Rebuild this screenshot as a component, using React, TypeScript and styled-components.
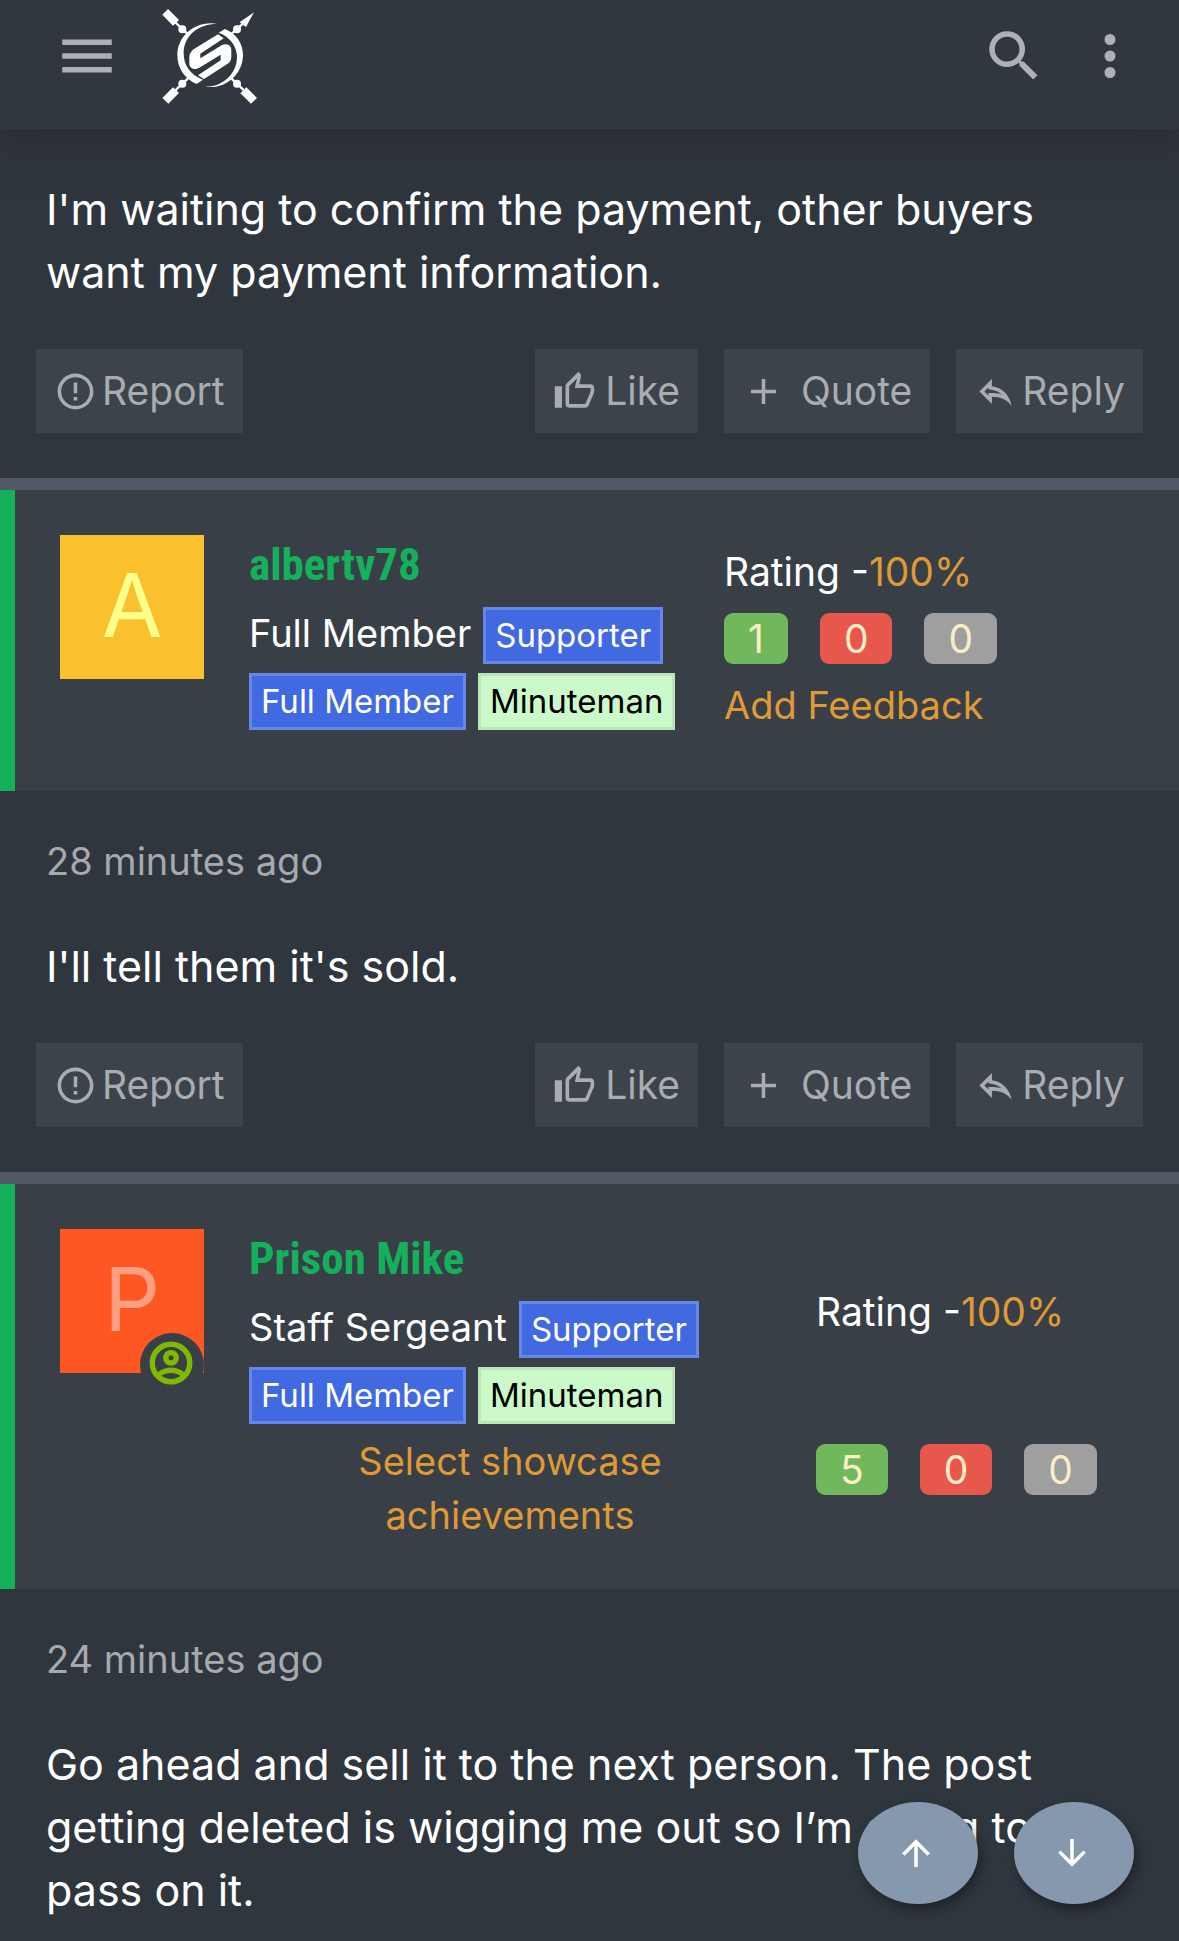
import React from "react";
import styled, { createGlobalStyle } from "styled-components";

const GlobalStyle = createGlobalStyle`
  *, *::before, *::after { box-sizing: border-box; }
  body {
    margin: 0;
    background: #30363e;
    color: #ffffff;
    font-family: Inter, Roboto, "Liberation Sans", sans-serif;
    font-size: 38px;
    line-height: 54px;
  }
  button {
    margin: 0;
    border: 0;
    font: inherit;
    color: inherit;
    cursor: pointer;
  }
  a { color: inherit; text-decoration: none; }
`;

const ICONS = {
  menu: "M3,6H21V8H3V6M3,11H21V13H3V11M3,16H21V18H3V16Z",
  search:
    "M9.5,3A6.5,6.5 0 0,1 16,9.5C16,11.11 15.41,12.59 14.44,13.73L14.71,14H15.5L20.5,19L19,20.5L14,15.5V14.71L13.73,14.44C12.59,15.41 11.11,16 9.5,16A6.5,6.5 0 0,1 3,9.5A6.5,6.5 0 0,1 9.5,3M9.5,5C7,5 5,7 5,9.5C5,12 7,14 9.5,14C12,14 14,12 14,9.5C14,7 12,5 9.5,5Z",
  more: "M12,16A2,2 0 0,1 14,18A2,2 0 0,1 12,20A2,2 0 0,1 10,18A2,2 0 0,1 12,16M12,10A2,2 0 0,1 14,12A2,2 0 0,1 12,14A2,2 0 0,1 10,12A2,2 0 0,1 12,10M12,4A2,2 0 0,1 14,6A2,2 0 0,1 12,8A2,2 0 0,1 10,6A2,2 0 0,1 12,4Z",
  report:
    "M11,15H13V17H11V15M11,7H13V13H11V7M12,2C6.47,2 2,6.5 2,12A10,10 0 0,0 12,22A10,10 0 0,0 22,12A10,10 0 0,0 12,2M12,20A8,8 0 0,1 4,12A8,8 0 0,1 12,4A8,8 0 0,1 20,12A8,8 0 0,1 12,20Z",
  like: "M5,9V21H1V9H5M9,21A2,2 0 0,1 7,19V9C7,8.45 7.22,7.95 7.59,7.59L14.17,1L15.23,2.06C15.5,2.33 15.67,2.7 15.67,3.11L15.64,3.43L14.69,8H21C22.11,8 23,8.9 23,10V12C23,12.26 22.95,12.5 22.86,12.73L19.84,19.78C19.54,20.5 18.83,21 18,21H9M9,19H18.03L21,12V10H12.21L13.34,4.68L9,9.03V19Z",
  plus: "M19,13H13V19H11V13H5V11H11V5H13V11H19V13Z",
  reply:
    "M8,9.8V10.7L9.7,11C12.3,11.4 14.2,12.4 15.6,13.7C13.9,13.2 12.1,12.9 10,12.9H8V14.2L5.8,12L8,9.8M10,5L3,12L10,19V14.9C15,14.9 18.5,16.5 21,20C20,15 17,10 10,9V5Z",
  up: "M13,20H11V8L5.5,13.5L4.08,12.08L12,4.16L19.92,12.08L18.5,13.5L13,8V20Z",
  down: "M11,4H13V16L18.5,10.5L19.92,11.92L12,19.84L4.08,11.92L5.5,10.5L11,16V4Z",
  account:
    "M12,2A10,10 0 0,0 2,12A10,10 0 0,0 12,22A10,10 0 0,0 22,12A10,10 0 0,0 12,2M7.07,18.28C7.5,17.38 10.12,16.5 12,16.5C13.88,16.5 16.5,17.38 16.93,18.28C15.57,19.36 13.86,20 12,20C10.14,20 8.43,19.36 7.07,18.28M18.36,16.83C16.93,15.09 13.46,14.5 12,14.5C10.54,14.5 7.07,15.09 5.64,16.83C4.62,15.5 4,13.82 4,12C4,7.59 7.59,4 12,4C16.41,4 20,7.59 20,12C20,13.82 19.38,15.5 18.36,16.83M12,6C10.06,6 8.5,7.56 8.5,9.5C8.5,11.44 10.06,13 12,13C13.94,13 15.5,11.44 15.5,9.5C15.5,7.56 13.94,6 12,6M12,11A1.5,1.5 0 0,1 10.5,9.5A1.5,1.5 0 0,1 12,8A1.5,1.5 0 0,1 13.5,9.5A1.5,1.5 0 0,1 12,11Z",
};

type IconName = keyof typeof ICONS;

const Svg = styled.svg<{ $size: number }>`
  display: block;
  flex: none;
  width: ${(p) => p.$size}px;
  height: ${(p) => p.$size}px;
  fill: currentColor;
`;

const Icon = ({ name, size }: { name: IconName; size: number }) => (
  <Svg $size={size} viewBox="0 0 24 24" aria-hidden="true">
    <path
      d={ICONS[name]}
      stroke={name === "account" ? "currentColor" : "none"}
      strokeWidth="0.6"
    />
  </Svg>
);

const TopBar = styled.header`
  position: relative;
  z-index: 2;
  display: flex;
  align-items: center;
  height: 129px;
  padding: 0 36px 17px 54px;
  background: #31373f;
  color: #adb1b5;
  box-shadow: 0 9px 42px rgba(36, 34, 44, 0.65);
`;

const BarButton = styled.button`
  display: flex;
  padding: 0;
  background: none;
`;

const LogoLink = styled.a`
  display: block;
  margin: 0 auto 0 42px;
  color: #ffffff;
`;

const Tools = styled.div`
  display: flex;
  gap: 30px;
`;

const Logo = () => (
  <Svg $size={95} viewBox="486 27 285 285" aria-hidden="true">
    <polygon points="504,27 487,44 519,77 537,60" />
    <polygon points="762,37 719,67 738,81" />
    <polygon points="519,262 487,294 505,311 537,279" />
    <polygon points="739,262 721,280 753,311 771,294" />
    <path
      d="M526 67L562 101M732 68L695 101M526 271L564 235M732 271L694 235"
      stroke="currentColor"
      strokeWidth="7"
    />
    <circle cx="547" cy="88" r="12" />
    <circle cx="711" cy="88" r="12" />
    <circle cx="547" cy="251" r="12" />
    <circle cx="711" cy="251" r="12" />
    <path d="M652 71C585 60 532 108 532 165C532 205 555 238 590 252L609 239C570 225 551 195 551 160C551 110 590 72 652 71Z" />
    <path d="M614 260C680 270 729 220 729 165C729 130 708 100 675 87L656 98C690 110 711 140 711 170C711 220 670 261 614 260Z" />
    <path d="M654 103L671 115L601 161L601 175L665 136C684 127 694 139 694 150V170C694 180 690 186 683 191L612 237L594 226L662 181V164L598 203C580 212 568 204 568 190V172C568 160 574 153 582 147Z" />
  </Svg>
);

const Article = styled.article`
  & + & {
    border-top: 12px solid #525866;
  }
`;

const UserPanel = styled.div<{ $ratingWidth: number }>`
  display: grid;
  grid-template-columns: 144px minmax(0, 1fr) ${(p) => p.$ratingWidth}px;
  column-gap: 45px;
  padding: 45px 45px 47px;
  border-left: 15px solid #14b05c;
  background: #393f47;
`;

const Avatar = styled.a<{ $bg: string; $fg: string }>`
  position: relative;
  display: flex;
  justify-content: center;
  width: 144px;
  height: 144px;
  background: ${(p) => p.$bg};
  color: ${(p) => p.$fg};
  font-size: 88px;
  line-height: 140px;
`;

const Online = styled.span`
  position: absolute;
  right: 0;
  bottom: -24px;
  display: flex;
  align-items: center;
  justify-content: center;
  width: 64px;
  height: 64px;
  padding: 0 2px 5px 0;
  border-radius: 50%;
  background: #393f47;
  color: #7fb900;
`;

const Details = styled.div`
  min-width: 0;
`;

const UserName = styled.h4`
  margin: 0 0 12px;
  color: #14b05c;
  font-family: "Roboto Condensed", "Liberation Sans Narrow", Roboto, sans-serif;
  font-size: 45px;
  font-weight: 700;
  line-height: 60px;
`;

const Titles = styled.div`
  display: flex;
  flex-wrap: wrap;
  align-items: baseline;
  gap: 9px 12px;
`;

const Title = styled.span`
  line-height: 48px;
`;

const Banner = styled.span<{ $light?: boolean }>`
  padding: 0 9px;
  border: 3px solid ${(p) => (p.$light ? "#bce6ba" : "#6686e8")};
  background: ${(p) => (p.$light ? "#ccf9c9" : "#4169e1")};
  color: ${(p) => (p.$light ? "#000000" : "#ffffff")};
  font-size: 33px;
  line-height: 51px;
`;

const Showcase = styled.a`
  display: block;
  margin-top: 10px;
  color: #df9a36;
  text-align: center;
`;

const Rating = styled.div<{ $spread: boolean }>`
  display: flex;
  flex-direction: column;
  gap: ${(p) => (p.$spread ? 105 : 14)}px;
  padding: ${(p) => (p.$spread ? "56px 0 0" : "10px 0 12px")};
`;

const RatingLine = styled.div`
  font-size: 39px;
`;

const Accent = styled.a`
  color: #df9a36;
`;

const Scores = styled.div`
  display: flex;
  gap: 32px;
`;

const Score = styled.a<{ $bg: string }>`
  padding: 0 24px;
  border-radius: 9px;
  background: ${(p) => p.$bg};
  color: #f9edc8;
  font-size: 39px;
  line-height: 51px;
`;

const Content = styled.div<{ $first?: boolean }>`
  padding: ${(p) => (p.$first ? 49 : 43)}px 36px 45px;
`;

const Time = styled.a`
  display: block;
  margin: 0 10px 47px;
  color: #a6aaaf;
`;

const Message = styled.p`
  margin: 0 10px 45px;
  font-size: 43px;
  line-height: 63px;
`;

const Actions = styled.div`
  display: flex;
  gap: 26px;
`;

const Action = styled.button<{ $gap: number; $push?: boolean }>`
  display: flex;
  align-items: center;
  gap: ${(p) => p.$gap}px;
  height: 84px;
  margin-right: ${(p) => (p.$push ? "auto" : 0)};
  padding: 0 18px;
  background: #3d434a;
  color: #a9adb1;
  font-size: 39px;
`;

const ScrollButtons = styled.nav`
  position: fixed;
  z-index: 3;
  right: 45px;
  bottom: 37px;
  display: flex;
  gap: 36px;
`;

const ScrollButton = styled.button`
  display: flex;
  align-items: center;
  justify-content: center;
  width: 120px;
  height: 102px;
  padding: 0 4px 0 0;
  border-radius: 50%;
  background: #8698ae;
  color: #ffffff;
  box-shadow: 3px 6px 12px rgba(0, 0, 0, 0.35);
`;

const PostActions = () => (
  <Actions>
    <Action type="button" $gap={5} $push>
      <Icon name="report" size={43} />
      Report
    </Action>
    <Action type="button" $gap={9}>
      <Icon name="like" size={43} />
      Like
    </Action>
    <Action type="button" $gap={16}>
      <Icon name="plus" size={43} />
      Quote
    </Action>
    <Action type="button" $gap={5}>
      <Icon name="reply" size={43} />
      Reply
    </Action>
  </Actions>
);

type User = {
  name: string;
  title: string;
  avatarBg: string;
  avatarFg: string;
  scores: [number, number, number];
  own?: boolean;
};

const SCORE_COLORS = ["#71b75b", "#e7574b", "#9f9f9f"];

const UserHeader = ({ user }: { user: User }) => (
  <UserPanel $ratingWidth={user.own ? 318 : 410}>
    <Avatar href="#profile" $bg={user.avatarBg} $fg={user.avatarFg}>
      {user.name[0].toUpperCase()}
      {user.own && (
        <Online>
          <Icon name="account" size={50} />
        </Online>
      )}
    </Avatar>
    <Details>
      <UserName>
        <a href="#profile">{user.name}</a>
      </UserName>
      <Titles>
        <Title>{user.title}</Title>
        <Banner>Supporter</Banner>
        <Banner>Full Member</Banner>
        <Banner $light>Minuteman</Banner>
      </Titles>
      {user.own && <Showcase href="#showcase">Select showcase achievements</Showcase>}
    </Details>
    <Rating $spread={!!user.own}>
      <RatingLine>
        Rating -<Accent href="#rating">100%</Accent>
      </RatingLine>
      <Scores>
        {user.scores.map((score, i) => (
          <Score key={i} href="#rating" $bg={SCORE_COLORS[i]}>
            {score}
          </Score>
        ))}
      </Scores>
      {!user.own && <Accent href="#feedback">Add Feedback</Accent>}
    </Rating>
  </UserPanel>
);

const ALBERT: User = {
  name: "albertv78",
  title: "Full Member",
  avatarBg: "#fbc02d",
  avatarFg: "#ffff8d",
  scores: [1, 0, 0],
};

const MIKE: User = {
  name: "Prison Mike",
  title: "Staff Sergeant",
  avatarBg: "#ff5722",
  avatarFg: "#ff9e80",
  scores: [5, 0, 0],
  own: true,
};

export default function App() {
  return (
    <>
      <GlobalStyle />
      <TopBar>
        <BarButton type="button" aria-label="Menu">
          <Icon name="menu" size={66} />
        </BarButton>
        <LogoLink href="#home" aria-label="Home">
          <Logo />
        </LogoLink>
        <Tools>
          <BarButton type="button" aria-label="Search">
            <Icon name="search" size={66} />
          </BarButton>
          <BarButton type="button" aria-label="More">
            <Icon name="more" size={66} />
          </BarButton>
        </Tools>
      </TopBar>
      <main>
        <Article>
          <Content $first>
            <Message>
              I'm waiting to confirm the payment, other buyers want my payment information.
            </Message>
            <PostActions />
          </Content>
        </Article>
        <Article>
          <UserHeader user={ALBERT} />
          <Content>
            <Time href="#post-2">28 minutes ago</Time>
            <Message>I'll tell them it's sold.</Message>
            <PostActions />
          </Content>
        </Article>
        <Article>
          <UserHeader user={MIKE} />
          <Content>
            <Time href="#post-3">24 minutes ago</Time>
            <Message>
              Go ahead and sell it to the next person. The post getting deleted is wigging me out
              so I’m going to pass on it.
            </Message>
          </Content>
        </Article>
      </main>
      <ScrollButtons aria-label="Scroll">
        <ScrollButton type="button" aria-label="Top">
          <Icon name="up" size={42} />
        </ScrollButton>
        <ScrollButton type="button" aria-label="Bottom">
          <Icon name="down" size={42} />
        </ScrollButton>
      </ScrollButtons>
    </>
  );
}
